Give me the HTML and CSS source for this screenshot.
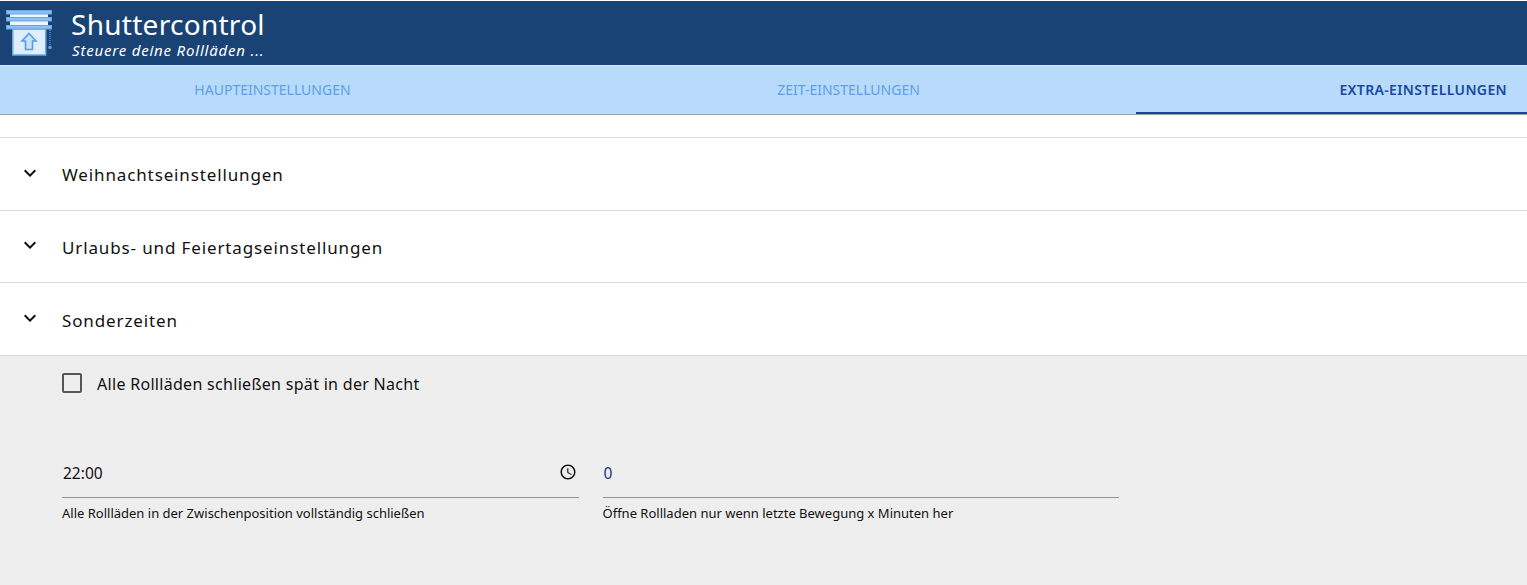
FILE: index.html
```html
<!DOCTYPE html>
<html lang="de">
<head>
<meta charset="utf-8">
<title>Shuttercontrol</title>
<link rel="stylesheet" href="styles.css">
</head>
<body>
<header class="header">
  <svg class="logo" width="47" height="46" viewBox="0 0 47 46">
    <rect x="4" y="2" width="38" height="16" fill="#eef6ff"/>
    <rect x="6.75" y="19" width="33" height="26" fill="#deeeff" stroke="#6ba5e4" stroke-width="1.5"/>
    <rect x="0.5" y="0.5" width="45" height="3.5" fill="#8cc0f2" stroke="#6ba5e4"/>
    <rect x="0.5" y="7.5" width="45" height="3.5" fill="#8cc0f2" stroke="#6ba5e4"/>
    <rect x="0.5" y="15.5" width="45" height="3.5" fill="#8cc0f2" stroke="#6ba5e4"/>
    <path d="M23 23.5 L30 31 H26.5 V39.5 H19.5 V31 H16 Z" fill="#c9e2fb" stroke="#5a9ae0" stroke-width="1.6"/>
    <path d="M44 20 V37" stroke="#4f8fd8" stroke-width="1.5" stroke-dasharray="1 1" fill="none"/>
    <circle cx="44" cy="37.5" r="1.8" fill="#5f9fe0"/>
  </svg>
  <div class="brand">
    <div class="title">Shuttercontrol</div>
    <div class="subtitle">Steuere deine Rollläden ...</div>
  </div>
</header>
<nav class="tabs">
  <div class="tab tab-first">HAUPTEINSTELLUNGEN</div>
  <div class="tab tab-second">ZEIT-EINSTELLUNGEN</div>
  <div class="tab tab-active">EXTRA-EINSTELLUNGEN</div>
</nav>
<main class="content">
  <section class="row">
    <svg class="chevron" width="24" height="24" viewBox="0 0 24 24"><path d="M7.41 8.59 12 13.17l4.59-4.58L18 10l-6 6-6-6z"/></svg>
    <span class="row-label">Weihnachtseinstellungen</span>
  </section>
  <section class="row">
    <svg class="chevron" width="24" height="24" viewBox="0 0 24 24"><path d="M7.41 8.59 12 13.17l4.59-4.58L18 10l-6 6-6-6z"/></svg>
    <span class="row-label">Urlaubs- und Feiertagseinstellungen</span>
  </section>
  <section class="row">
    <svg class="chevron" width="24" height="24" viewBox="0 0 24 24"><path d="M7.41 8.59 12 13.17l4.59-4.58L18 10l-6 6-6-6z"/></svg>
    <span class="row-label">Sonderzeiten</span>
  </section>
  <section class="panel">
    <div class="check-line">
      <span class="checkbox"></span>
      <span class="check-label">Alle Rollläden schließen spät in der Nacht</span>
    </div>
    <div class="fields">
      <div class="field">
        <div class="field-value">
          <span class="value-time">22:00</span>
          <svg class="clock" width="18" height="18" viewBox="0 0 24 24"><path d="M11.99 2C6.47 2 2 6.48 2 12s4.47 10 9.99 10C17.52 22 22 17.52 22 12S17.52 2 11.99 2zM12 20c-4.42 0-8-3.58-8-8s3.58-8 8-8 8 3.58 8 8-3.58 8-8 8z"/><path d="M12.5 7H11v6l5.25 3.15.75-1.23-4.5-2.67z"/></svg>
        </div>
        <div class="field-help">Alle Rollläden in der Zwischenposition vollständig schließen</div>
      </div>
      <div class="field">
        <div class="field-value"><span class="value-num">0</span></div>
        <div class="field-help">Öffne Rollladen nur wenn letzte Bewegung x Minuten her</div>
      </div>
    </div>
  </section>
</main>
</body>
</html>
```
FILE: styles.css
```css
* { box-sizing: border-box; }
html, body { margin: 0; padding: 0; height: 585px; overflow: hidden; background: #fff; }
body { font-family: "Noto Sans", "Open Sans", sans-serif; color: #111; }

.header {
  height: 65px;
  margin-top: 1px;
  background: #194375;
  border-bottom: 1px solid #dbe9f7;
  display: flex;
  align-items: flex-start;
  padding: 9px 0 0 6px;
  color: #fff;
}
.logo { flex: none; display: block; }
.brand { margin: -1px 0 0 18px; }
.title { font-size: 28px; line-height: 30px; letter-spacing: 0.28px; }
.subtitle { font-size: 15px; line-height: 20px; font-style: italic; letter-spacing: 0.8px; margin-top: 1px; padding-left: 1px; }

.tabs {
  height: 49px;
  background: #b9dbfb;
  border-bottom: 1px solid #9e9e9e;
  display: grid;
  grid-template-columns: 545px 591px 391px;
}
.tab { font-size: 14px; line-height: 48px; height: 48px; color: #5c9fe8; text-align: center; }
.tab-second { padding-left: 16px; }
.tab-active {
  color: #1848a0;
  font-weight: 600;
  letter-spacing: 0.35px;
  text-align: right;
  padding-right: 20px;
  border-bottom: 2px solid #0d47a1;
}

.content { padding-top: 22px; }
.row {
  height: 72.67px;
  border-top: 1px solid #dcdcdc;
  display: flex;
  align-items: center;
  padding: 2px 0 0 18px;
}
.chevron { flex: none; fill: #111; margin-top: -4px; }
.row-label { margin-left: 20px; font-size: 17px; letter-spacing: 0.87px; }

.panel {
  height: 240px;
  background: #eee;
  border-top: 1px solid #dcdcdc;
  padding: 16px 0 0 62px;
}
.check-line { display: flex; align-items: center; height: 24px; }
.checkbox {
  width: 20px;
  height: 20px;
  border: 2px solid #555;
  border-radius: 2px;
  flex: none;
  margin-top: -2px;
}
.check-label { margin-left: 15px; font-size: 16px; letter-spacing: 0.3px; }

.fields { display: flex; gap: 24px; margin-top: 66px; }
.field { flex: 0 0 516.5px; }
.field-value {
  height: 36px;
  border-bottom: 1px solid #949494;
  display: flex;
  justify-content: space-between;
  align-items: flex-start;
  font-size: 15.5px;
  line-height: 22px;
  padding-left: 1px;
  padding-right: 2px;
}
.value-num { color: #123a7a; }
.clock { flex: none; fill: #111; margin-top: 1px; }
.field-help { font-size: 13px; line-height: 16px; margin-top: 7px; }
```
